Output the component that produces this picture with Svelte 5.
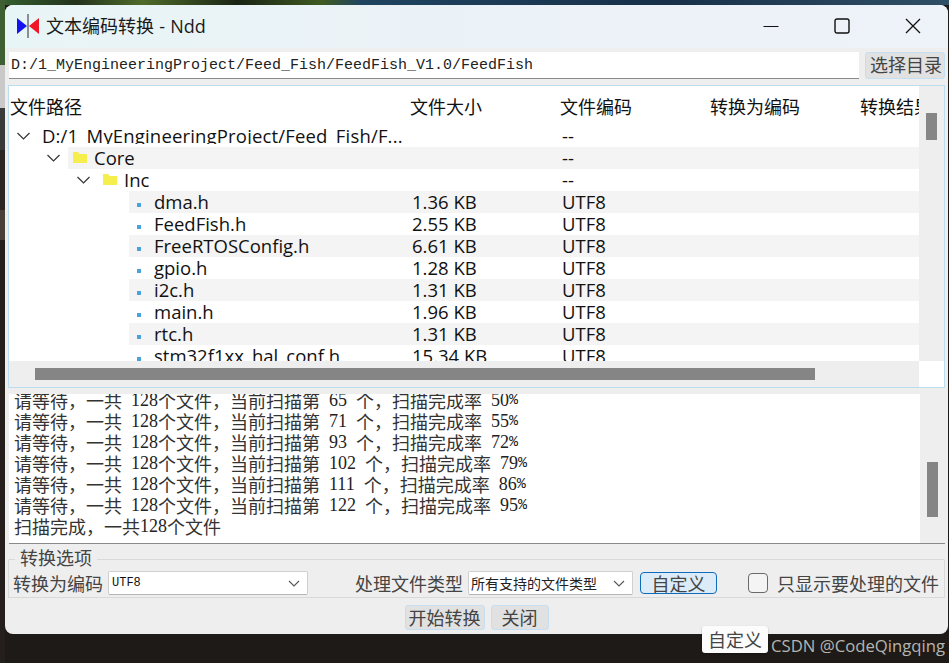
<script>
  const rows = [
    { name: 'D:/1_MyEngineeringProject/Feed_Fish/F...', enc: '--', depth: 0, kind: 'root' },
    { name: 'Core', enc: '--', depth: 1, kind: 'dir' },
    { name: 'Inc', enc: '--', depth: 2, kind: 'dir' },
    { name: 'dma.h', size: '1.36 KB', enc: 'UTF8', depth: 3, kind: 'file' },
    { name: 'FeedFish.h', size: '2.55 KB', enc: 'UTF8', depth: 3, kind: 'file' },
    { name: 'FreeRTOSConfig.h', size: '6.61 KB', enc: 'UTF8', depth: 3, kind: 'file' },
    { name: 'gpio.h', size: '1.28 KB', enc: 'UTF8', depth: 3, kind: 'file' },
    { name: 'i2c.h', size: '1.31 KB', enc: 'UTF8', depth: 3, kind: 'file' },
    { name: 'main.h', size: '1.96 KB', enc: 'UTF8', depth: 3, kind: 'file' },
    { name: 'rtc.h', size: '1.31 KB', enc: 'UTF8', depth: 3, kind: 'file' },
    { name: 'stm32f1xx_hal_conf.h', size: '15.34 KB', enc: 'UTF8', depth: 3, kind: 'file' }
  ];
  const logs = [
    '请等待，一共 128个文件，当前扫描第 65 个，扫描完成率 50%',
    '请等待，一共 128个文件，当前扫描第 71 个，扫描完成率 55%',
    '请等待，一共 128个文件，当前扫描第 93 个，扫描完成率 72%',
    '请等待，一共 128个文件，当前扫描第 102 个，扫描完成率 79%',
    '请等待，一共 128个文件，当前扫描第 111 个，扫描完成率 86%',
    '请等待，一共 128个文件，当前扫描第 122 个，扫描完成率 95%',
    '扫描完成，一共128个文件'
  ];
  const kindOf = (t) => (/^[0-9]/.test(t) ? 'num' : t.charCodeAt(0) < 128 ? 'asc' : 'cjk');
  const runs = (s) => s.match(/[0-9]+|[\x00-\x2f\x3a-\x7f]+|[^\x00-\x7f]+/g).map((t) => ({ t, kind: kindOf(t) }));
</script>

<div class="desk">
  <div class="win">
    <header class="title">
      <svg class="logo" width="24" height="24" viewBox="0 0 24 24">
        <path d="M1 4 L11 12 L1 20 Z" fill="#1414f0"/>
        <path d="M23 4 L13 12 L23 20 Z" fill="#f01428"/>
        <rect x="11" y="0" width="2" height="24" fill="#8a8f94"/>
      </svg>
      <span class="title-text">文本编码转换 - Ndd</span>
      <div class="caps">
        <svg width="16" height="16" viewBox="0 0 16 16"><path d="M0.5 8.5H15.5" stroke="#111" stroke-width="1.2" fill="none"/></svg>
        <svg width="16" height="16" viewBox="0 0 16 16"><rect x="1" y="1" width="14" height="14" rx="2" stroke="#111" stroke-width="1.4" fill="none"/></svg>
        <svg width="16" height="16" viewBox="0 0 16 16"><path d="M1 1L15 15M15 1L1 15" stroke="#111" stroke-width="1.3" fill="none"/></svg>
      </div>
    </header>

    <div class="pathbar">
      <div class="path">D:/1_MyEngineeringProject/Feed_Fish/FeedFish_V1.0/FeedFish</div>
      <div class="btn pick">选择目录</div>
    </div>

    <section class="tree">
      <div class="tree-main">
        <div class="tree-body">
          <div class="head">
            <span>文件路径</span><span>文件大小</span><span>文件编码</span><span>转换为编码</span><span>转换结果</span>
          </div>
          <div class="list">
            {#each rows as r, i}
              <div class="row">
                <div class="namecell" class:d0={r.depth === 0} class:d1={r.depth === 1} class:d2={r.depth === 2} class:d3={r.depth === 3}>
                  {#if r.kind !== 'file'}
                    <svg class="arrow" width="13" height="8" viewBox="0 0 13 8"><path d="M0.500 1L6.500 7L12.500 1" stroke="#333" stroke-width="1.2" fill="none"/></svg>
                  {/if}
                  <div class="namefill" class:alt={i % 2 === 1}>
                    {#if r.kind === 'dir'}
                      <svg class="ico" width="14" height="11" viewBox="0 0 14 11"><path d="M0 0H5L6.500 2H14V11H0Z" fill="#f6ee4c"/></svg>
                    {:else if r.kind === 'file'}
                      <span class="dot"></span>
                    {/if}
                    <span class="nm">{r.name}</span>
                  </div>
                </div>
                <div class="cells" class:alt={i % 2 === 1}>
                  <span class="c-size">{r.size ?? ''}</span>
                  <span class="c-enc">{r.enc}</span>
                </div>
              </div>
            {/each}
          </div>
        </div>
        <div class="vbar"><div class="vthumb"></div></div>
      </div>
      <div class="tree-foot">
        <div class="hbar"><div class="hthumb"></div></div>
        <div class="corner"></div>
      </div>
    </section>

    <section class="log">
      <div class="log-text">
        {#each logs as l}<div class="line">{#each runs(l) as p}<span class={p.kind}>{p.t}</span>{/each}</div>{/each}
      </div>
      <div class="logbar"><div class="logthumb"></div></div>
    </section>

    <section class="opts">
      <div class="opts-title"><span>转换选项</span></div>
      <div class="opts-row">
        <span class="lbl">转换为编码</span>
        <div class="combo c1"><span class="utf">UTF8</span><svg width="12" height="7" viewBox="0 0 12 7"><path d="M1 1L6 6L11 1" stroke="#555" stroke-width="1.1" fill="none"/></svg></div>
        <span class="lbl second">处理文件类型</span>
        <div class="combo c2"><span class="all">所有支持的文件类型</span><svg width="12" height="7" viewBox="0 0 12 7"><path d="M1 1L6 6L11 1" stroke="#555" stroke-width="1.1" fill="none"/></svg></div>
        <div class="btn custom">自定义</div>
        <span class="check"></span>
        <span class="lbl">只显示要处理的文件</span>
      </div>
    </section>

    <footer class="foot">
      <div class="btn start">开始转换</div>
      <div class="btn close">关闭</div>
    </footer>
  </div>

  <div class="tip">自定义</div>
  <div class="mark">CSDN @CodeQingqing</div>
</div>

<style>
  :global(body) { margin: 0; background: #1e1a17; }
  .desk {
    position: relative;
    width: 949px;
    height: 663px;
    overflow: hidden;
    padding: 5px 1px 0 5px;
    box-sizing: border-box;
    background:
      linear-gradient(180deg, #3d5f33 0 65px, #c9c9c9 65px 108px, #3a3a3a 108px 150px, #2b2624 150px 210px, #4a3f38 210px 240px, #241f1c 240px) 0 0 / 5px 100% no-repeat,
      linear-gradient(90deg, #35602f 0, #23331c 8%, #4f6b2a 15%, #1a2414 25%, #3f5a22 34%, #1f4460 38%, #18304a 70%, #2f4f66 100%) 0 0 / 100% 5px no-repeat,
      #1e1a17;
    font-family: "Noto Sans CJK SC", sans-serif;
    color: #111;
  }
  .win {
    width: 943px;
    height: 629px;
    border-radius: 8px;
    background: #eeeeee;
    overflow: hidden;
    display: flex;
    flex-direction: column;
  }
  .title {
    height: 43px;
    flex: none;
    background: linear-gradient(90deg, #e8f5f6 0, #ebf2f7 45%, #eef2f9 100%);
    display: flex;
    align-items: center;
    padding-left: 11px;
    padding-bottom: 1px;
    box-sizing: border-box;
  }
  .logo { flex: none; }
  .title-text { margin-left: 6px; font-size: 18px; font-family: "Open Sans", "Noto Sans CJK SC", sans-serif; color: #1a1a1a; line-height: 1; word-spacing: 0.5px; }
  .caps { margin-left: auto; display: flex; gap: 55px; padding-right: 27px; align-items: center; }
  .caps svg { display: block; }

  .pathbar {
    display: flex;
    height: 27px;
    margin-top: 4px;
    padding: 0 3px 0 4px;
    gap: 6px;
    flex: none;
  }
  .path {
    flex: 1;
    background: #fff;
    border-bottom: 1px solid #8a8a8a;
    box-sizing: border-box;
    font-family: "Liberation Mono", "Noto Sans CJK SC", monospace;
    font-size: 15px;
    line-height: 27px;
    padding-left: 2px;
    color: #222;
  }
  .btn {
    box-sizing: border-box;
    background: #e1e1e1;
    border: 1px solid #c5dff2;
    border-radius: 3px;
    color: #444;
    font-size: 18px;
    text-align: center;
  }
  .pick { width: 80px; line-height: 23px; padding-left: 2px; }

  .tree {
    margin: 6px 3px 0;
    height: 303px;
    border: 1px solid #bcdcf0;
    background: #fff;
    display: flex;
    flex-direction: column;
    flex: none;
    box-sizing: border-box;
  }
  .tree-main { flex: 1; min-height: 0; display: flex; }
  .tree-body { flex: 1; min-width: 0; overflow: hidden; }
  .head {
    display: grid;
    grid-template-columns: 400px 150px 150px 150px 60px;
    height: 39px;
    padding-left: 1px;
    font-size: 18px;
    line-height: 40px;
    white-space: nowrap;
    overflow: hidden;
  }
  .head span { overflow: hidden; height: 39px; }
  .row { display: flex; height: 22px; }
  .namecell { width: 403px; flex: none; display: flex; align-items: center; box-sizing: border-box; }
  .d0 { padding-left: 8px; }
  .d1 { padding-left: 38px; }
  .d2 { padding-left: 68px; }
  .d3 { padding-left: 120px; }
  .arrow { flex: none; margin-right: 8px; }
  .namefill { flex: 1; height: 22px; display: flex; align-items: center; min-width: 0; }
  .d0 .namefill { padding-left: 4px; }
  .d1 .namefill, .d2 .namefill { padding-left: 5px; }
  .d0 .nm { letter-spacing: 0.17px; clip-path: inset(0 0 3px 0); }
  .alt { background: #f4f4f4; }
  .ico { flex: none; margin-right: 7px; margin-top: -1px; }
  .dot { width: 4px; height: 4px; background: #4aa3df; flex: none; margin: 6px 13px 0 8px; }
  .nm, .c-size, .c-enc { font-family: "Open Sans", "Noto Sans CJK SC", sans-serif; font-size: 18.5px; line-height: 22px; white-space: nowrap; color: #111; }
  .cells { flex: 1; display: flex; height: 22px; }
  .c-size { width: 150px; flex: none; }
  .vbar { width: 25px; flex: none; background: #eeeeee; padding: 27px 0 0 7px; box-sizing: border-box; }
  .vthumb { width: 11px; height: 27px; background: #868686; }
  .tree-foot { height: 26px; display: flex; flex: none; }
  .hbar { flex: 1; background: #eeeeee; padding: 7px 0 0 26px; box-sizing: border-box; }
  .hthumb { width: 780px; height: 12px; background: #858585; }
  .corner { width: 25px; background: #fff; }

  .log {
    margin: 6px 3px 0 4px;
    height: 150px;
    background: #fff;
    border-bottom: 1px solid #8a8a8a;
    display: flex;
    flex: none;
    box-sizing: border-box;
    overflow: hidden;
  }
  .log-text { flex: 1; padding-left: 5px; overflow: hidden; }
  .line { height: 21px; line-height: 21px; font-size: 18px; white-space: pre; color: #333; }
  .line:first-child { margin-top: -4px; }
  .line span { display: inline-block; line-height: 21px; height: 21px; vertical-align: top; }
  .asc { font-family: "Liberation Mono", monospace; font-size: 15px; color: #222; }
  .num { font-family: "Liberation Serif", serif; font-size: 18px; color: #222; }
  .logbar { width: 25px; flex: none; background: #eeeeee; padding: 68px 0 0 7px; box-sizing: border-box; }
  .logthumb { width: 11px; height: 55px; background: #858585; }

  .opts { margin: 0 3px; flex: none; height: 54px; display: flex; flex-direction: column; }
  .opts-title { height: 15px; flex: none; position: relative; border: 1px solid #d9d9d9; border-width: 0 1px 1px; border-left-color: transparent; border-right-color: transparent; }
  .opts-title span { position: absolute; left: 6px; top: 2px; background: #eeeeee; padding: 0 5px; font-size: 18px; line-height: 22px; color: #444; z-index: 1; }
  .opts-row { flex: 1; border: 1px solid #d9d9d9; border-top: none; display: flex; align-items: center; padding: 9px 0 0 4px; box-sizing: border-box; }
  .lbl { font-size: 18px; line-height: 22px; color: #444; white-space: nowrap; }
  .combo {
    box-sizing: border-box;
    height: 24px;
    background: #fff;
    border: 1px solid #d0d0d0;
    border-bottom-color: #b5b5b5;
    border-radius: 2px;
    display: flex;
    align-items: center;
    justify-content: space-between;
    padding: 0 7px 0 3px;
    flex: none;
  }
  .c1 { width: 200px; margin-left: 5px; }
  .c2 { width: 165px; margin-left: 5px; padding-left: 2px; }
  .second { margin-left: 47px; }
  .utf { font-family: "Liberation Mono", monospace; font-size: 12px; color: #111; }
  .all { font-size: 14px; color: #222; line-height: 22px; }
  .custom { width: 77px; height: 22px; line-height: 20px; margin-left: 7px; background: #dcebf8; border-color: #0f6cbd; border-radius: 4px; }
  .check { width: 20px; height: 20px; box-sizing: border-box; border: 1px solid #6a6a6a; border-radius: 4px; margin: 0 9px 0 31px; flex: none; background: #f4f4f4; }

  .foot { flex: 1; display: flex; justify-content: center; gap: 6px; padding-top: 7px; box-sizing: border-box; }
  .start, .close { height: 25px; line-height: 23px; }
  .start { width: 80px; }
  .close { width: 58px; }

  .tip {
    position: absolute;
    left: 702px;
    top: 626px;
    width: 66px;
    height: 27px;
    background: #fcfcfc;
    border-radius: 3px;
    box-shadow: 0 1px 2px rgba(0, 0, 0, 0.3);
    font-size: 18px;
    line-height: 27px;
    text-align: center;
    color: #444;
  }
  .mark {
    position: absolute;
    left: 771px;
    top: 636px;
    font-family: "Open Sans", sans-serif;
    font-size: 16.700px;
    line-height: 20px;
    color: #b5b5b0;
    white-space: nowrap;
  }
</style>
